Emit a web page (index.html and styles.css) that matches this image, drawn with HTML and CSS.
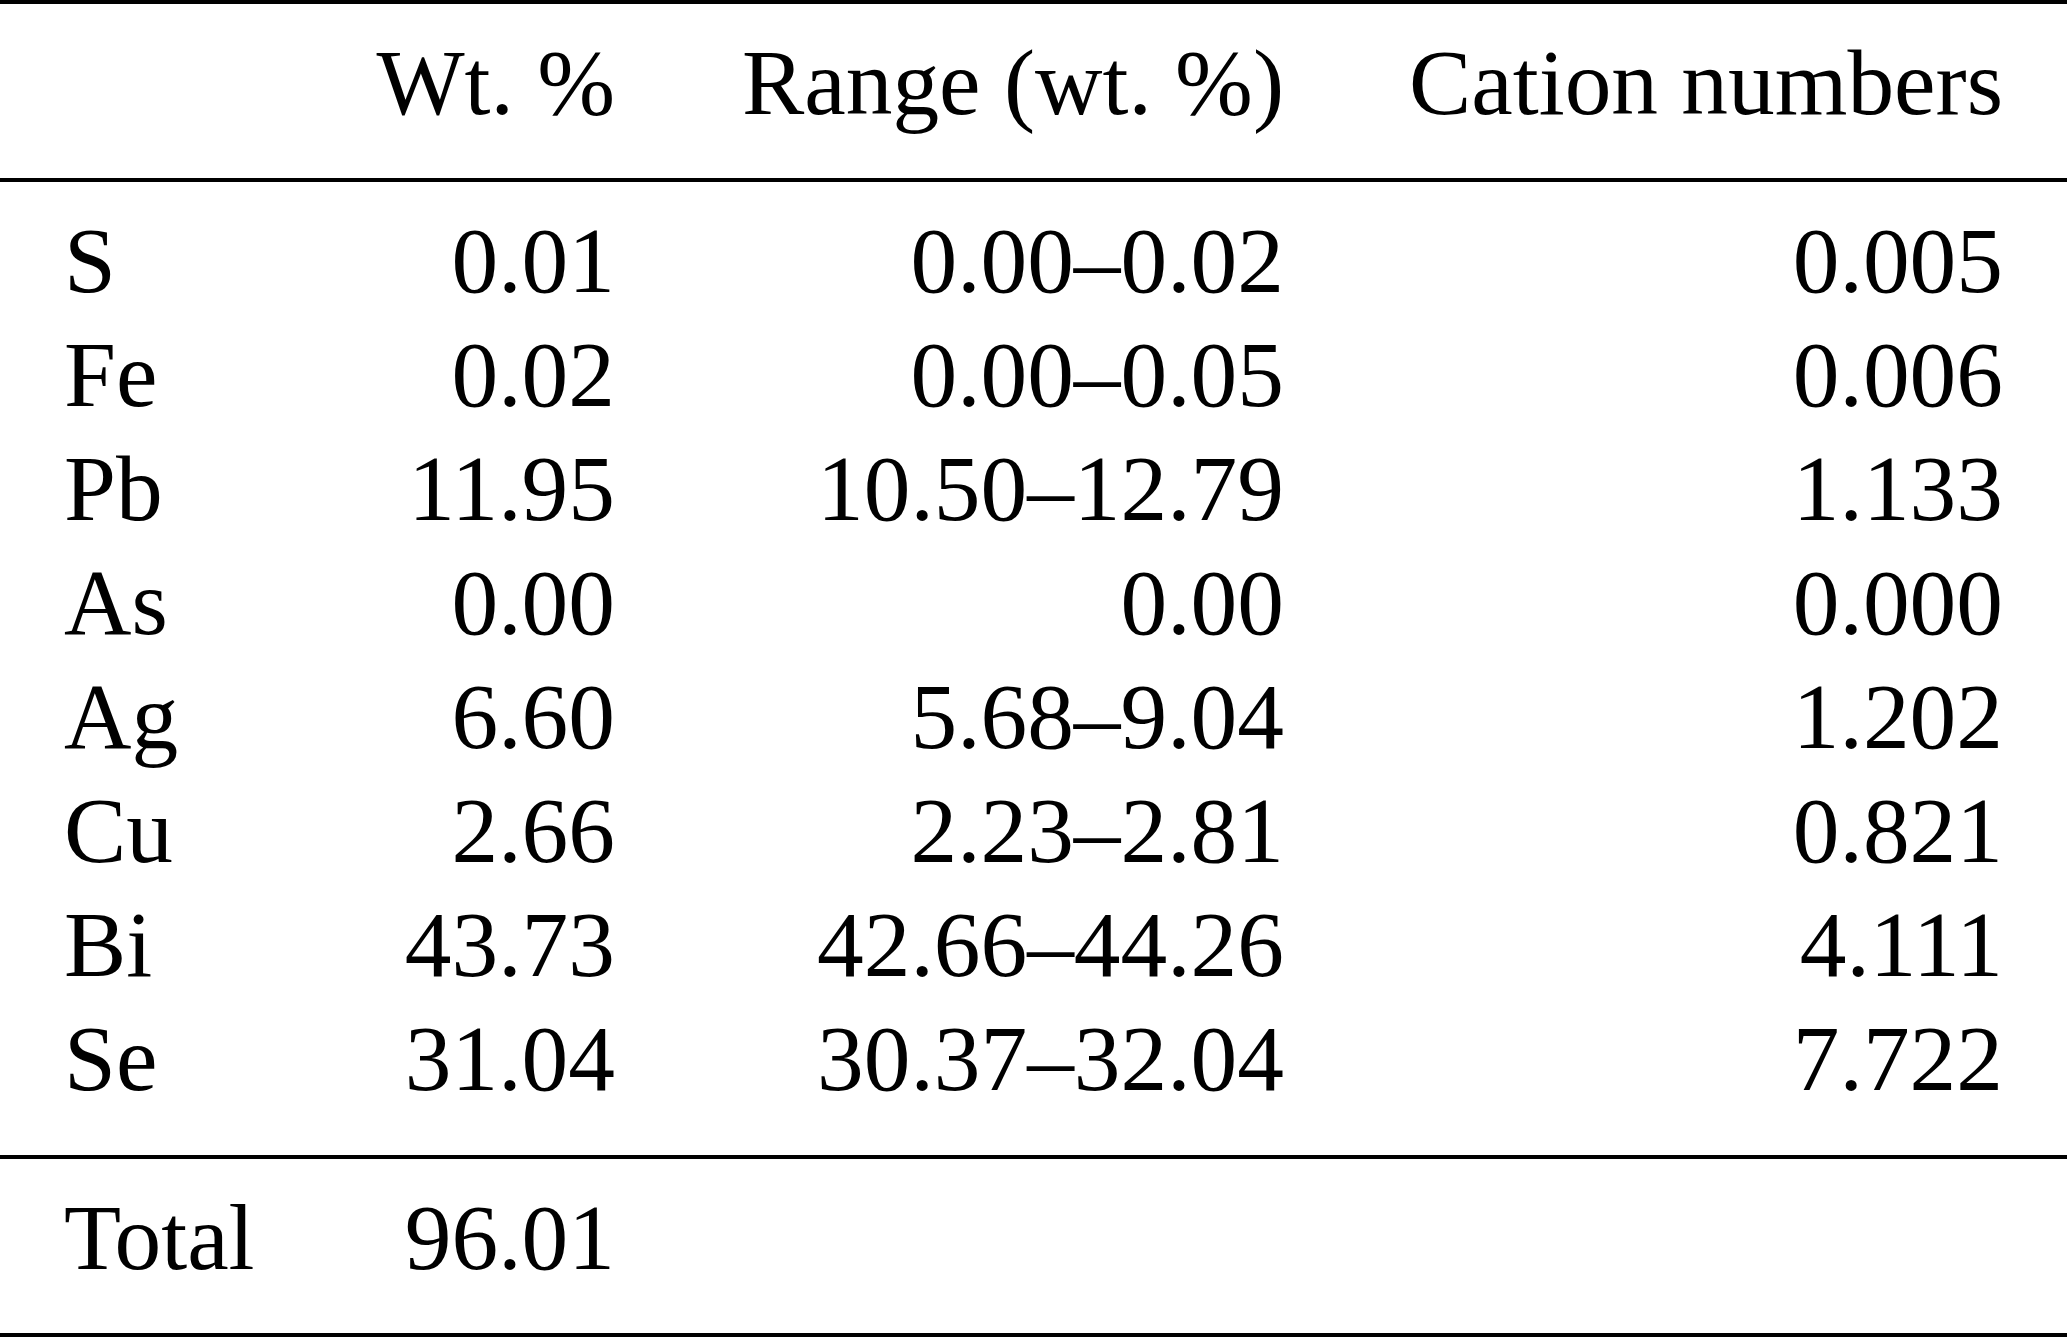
FILE: index.html
```html
<!DOCTYPE html>
<html lang="en">
<head>
<meta charset="utf-8">
<title>Composition table</title>
<link rel="stylesheet" href="styles.css">
</head>
<body>
<table class="comp">
  <colgroup>
    <col class="c-el">
    <col class="c-wt">
    <col class="c-range">
    <col class="c-cat">
  </colgroup>
  <thead>
    <tr>
      <th class="el"></th>
      <th class="num">Wt. %</th>
      <th class="num">Range (wt. %)</th>
      <th class="num last">Cation numbers</th>
    </tr>
  </thead>
  <tbody>
    <tr class="first"><td class="el">S</td><td class="num">0.01</td><td class="num">0.00–0.02</td><td class="num last">0.005</td></tr>
    <tr><td class="el">Fe</td><td class="num">0.02</td><td class="num">0.00–0.05</td><td class="num last">0.006</td></tr>
    <tr><td class="el">Pb</td><td class="num">11.95</td><td class="num">10.50–12.79</td><td class="num last">1.133</td></tr>
    <tr><td class="el">As</td><td class="num">0.00</td><td class="num">0.00</td><td class="num last">0.000</td></tr>
    <tr><td class="el">Ag</td><td class="num">6.60</td><td class="num">5.68–9.04</td><td class="num last">1.202</td></tr>
    <tr><td class="el">Cu</td><td class="num">2.66</td><td class="num">2.23–2.81</td><td class="num last">0.821</td></tr>
    <tr><td class="el">Bi</td><td class="num">43.73</td><td class="num">42.66–44.26</td><td class="num last">4.111</td></tr>
    <tr class="final"><td class="el">Se</td><td class="num">31.04</td><td class="num">30.37–32.04</td><td class="num last">7.722</td></tr>
  </tbody>
  <tfoot>
    <tr><td class="el">Total</td><td class="num">96.01</td><td class="num"></td><td class="num last"></td></tr>
  </tfoot>
</table>
</body>
</html>
```
FILE: styles.css
```css
html, body {
  margin: 0;
  padding: 0;
  background: #ffffff;
}

body {
  font-family: "Liberation Serif", "Times New Roman", serif;
  font-size: 93.4px;
  line-height: 114px;
  color: #000000;
}

.comp {
  width: 2067px;
  border-collapse: collapse;
  table-layout: fixed;
  border-top: 4px solid #000;
  border-bottom: 4px solid #000;
}

.c-el { width: 300px; }
.c-wt { width: 315px; }
.c-range { width: 669px; }
.c-cat { width: 783px; }

.comp th,
.comp td {
  padding: 0;
  white-space: nowrap;
  font-weight: normal;
  vertical-align: baseline;
}

.comp .el {
  text-align: left;
  padding-left: 64px;
}

.comp .num {
  text-align: right;
}

.comp .last {
  padding-right: 64px;
}

.comp thead th {
  padding-top: 22px;
  padding-bottom: 38px;
  border-bottom: 4px solid #000;
}

.comp tbody tr.first td {
  padding-top: 22px;
}

.comp tbody tr.final td {
  padding-bottom: 39px;
}

.comp tfoot td {
  padding-top: 22px;
  padding-bottom: 38px;
  border-top: 4px solid #000;
}
```
